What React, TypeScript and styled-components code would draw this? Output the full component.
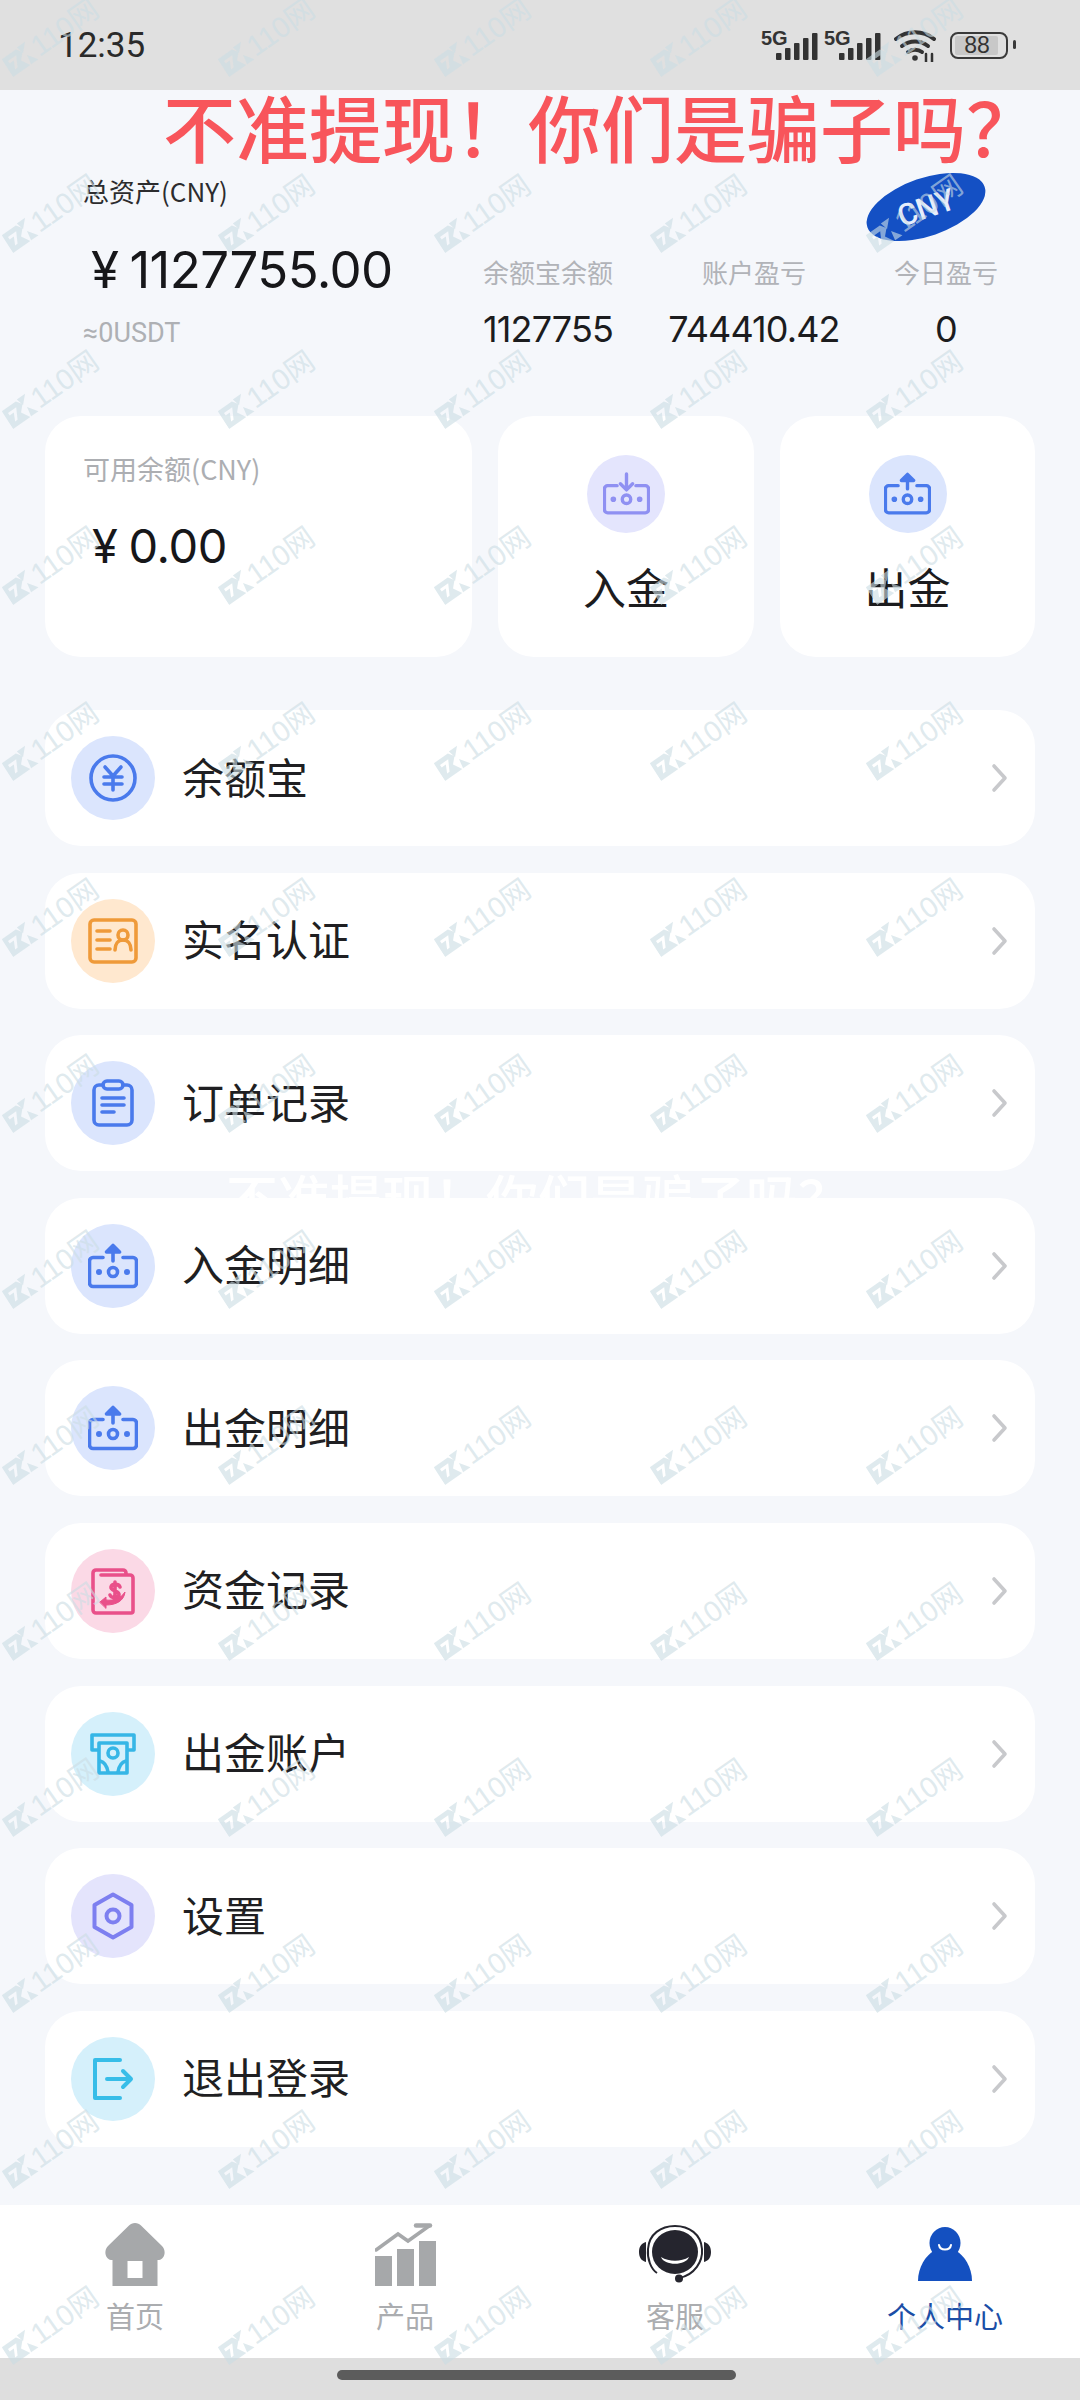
import React from 'react';
import styled, { createGlobalStyle } from 'styled-components';

const GlobalStyle = createGlobalStyle`
  html, body {
    margin: 0;
    padding: 0;
    background: #f5f7fb;
  }
  * {
    box-sizing: border-box;
  }
`;

const Page = styled.div`
  position: relative;
  width: 1080px;
  height: 2400px;
  overflow: hidden;
  display: flex;
  flex-direction: column;
  background: #f5f7fb;
  font-family: 'Noto Sans CJK SC', 'Liberation Sans', sans-serif;
  color: #1c1c1e;
`;

const StatusBar = styled.div`
  height: 90px;
  flex: none;
  display: flex;
  align-items: center;
  justify-content: space-between;
  padding: 0 72px 0 58px;
  background: #e0e0e0;
`;

const Clock = styled.span`
  font-family: Roboto, 'Liberation Sans', sans-serif;
  font-size: 35px;
  color: #2a2a2a;
`;

const StatusIcons = styled.div`
  display: flex;
  align-items: center;
  gap: 6px;

  > svg {
    margin-bottom: 5px;
  }
`;

const WifiSlot = styled.div`
  display: flex;
  margin: 2px 8px 0 7px;
`;

const Battery = styled.div`
  position: relative;
  width: 58px;
  height: 27px;
  display: flex;
  align-items: center;
  justify-content: center;
  border: 2.5px solid #3a3a3a;
  border-radius: 8px;
  font-family: 'Liberation Sans', sans-serif;
  font-size: 23px;
  color: #333;

  &::before {
    content: '';
    position: absolute;
    inset: 2px 8px 2px 3px;
    border-radius: 2px;
    background: #c8c8c8;
  }

  &::after {
    content: '';
    position: absolute;
    top: 6px;
    right: -9.5px;
    width: 3px;
    height: 9px;
    border-radius: 2px;
    background: #3a3a3a;
  }

  span {
    position: relative;
    margin-right: 4px;
  }
`;

const Headline = styled.div`
  height: 72px;
  flex: none;
  margin-top: -1px;
  padding-left: 163px;
  font-size: 73px;
  font-weight: 500;
  line-height: 72px;
  white-space: nowrap;
  color: #f8555b;
`;

const Summary = styled.section`
  position: relative;
  height: 255px;
  flex: none;
  display: flex;
  justify-content: space-between;
  padding: 13px 83px 0 83px;
`;

const TotalColumn = styled.div`
  display: flex;
  flex-direction: column;
`;

const TotalLabel = styled.div`
  font-size: 26px;
  line-height: 34px;
  white-space: nowrap;
  color: #2c2c2e;
`;

const TotalValue = styled.div`
  margin: 31px 0 0 8px;
  font-family: Inter, 'Liberation Sans', sans-serif;
  font-size: 51px;
  line-height: 62px;
  letter-spacing: -0.6px;
  color: #17171a;
`;

const Currency = styled.span`
  margin-right: 11px;
`;

const Approx = styled.div`
  margin-top: 16px;
  font-family: Roboto, 'Liberation Sans', sans-serif;
  font-size: 27px;
  line-height: 32px;
  color: #aeb0b4;
`;

const StatRow = styled.div`
  display: grid;
  grid-template-columns: 130px 282px 102px;
  margin-top: 80px;
`;

const Stat = styled.div`
  display: flex;
  flex-direction: column;
  align-items: center;
  white-space: nowrap;
`;

const StatLabel = styled.div`
  font-size: 26px;
  line-height: 36px;
  color: #b1b3b8;
`;

const StatValue = styled.div`
  margin-top: 19px;
  font-family: Inter, 'Liberation Sans', sans-serif;
  font-size: 36px;
  line-height: 40px;
  letter-spacing: -0.9px;
  color: #1c1c1e;
`;

const CnyBadge = styled.div`
  position: absolute;
  top: 17px;
  right: 92px;
  width: 124px;
  height: 58px;
  display: flex;
  align-items: center;
  justify-content: center;
  border-radius: 50%;
  transform: rotate(-19deg);
  background: #1450c4;
  font-family: Roboto, 'Liberation Sans', sans-serif;
  font-weight: 500;
  font-size: 30px;
  color: #e7eefc;
`;

const CardRow = styled.section`
  position: relative;
  z-index: 1;
  height: 241px;
  flex: none;
  display: grid;
  grid-template-columns: 427px 256px 255px;
  column-gap: 26px;
  margin: 0 45px;
`;

const Card = styled.div`
  border-radius: 36px;
  background: #ffffff;
`;

const BalanceCard = styled(Card)`
  padding: 33px 38px;
`;

const BalanceLabel = styled.div`
  font-size: 27px;
  line-height: 40px;
  color: #acaeb2;
`;

const BalanceValue = styled.div`
  margin: 32px 0 0 9px;
  font-family: Inter, 'Liberation Sans', sans-serif;
  font-size: 47px;
  line-height: 50px;
  letter-spacing: -0.4px;
  color: #17171a;
`;

const ActionCard = styled(Card)`
  display: flex;
  flex-direction: column;
  align-items: center;
  padding-top: 39px;
`;

const ActionCircle = styled.div<{ $bg: string }>`
  width: 78px;
  height: 78px;
  display: flex;
  align-items: center;
  justify-content: center;
  border-radius: 50%;
  background: ${p => p.$bg};
`;

const ActionLabel = styled.div`
  margin-top: 25px;
  font-size: 43px;
  line-height: 56px;
  color: #1c1c1e;
`;

const MenuList = styled.section`
  position: relative;
  z-index: 1;
  flex: none;
  display: flex;
  flex-direction: column;
  gap: 26.6px;
  margin: 53px 45px 0;
`;

const MenuRow = styled.div`
  height: 136px;
  display: flex;
  align-items: center;
  padding: 0 27px 0 26px;
  border-radius: 36px;
  background: #ffffff;
`;

const MenuCircle = styled.div<{ $bg: string }>`
  width: 84px;
  height: 84px;
  flex: none;
  display: flex;
  align-items: center;
  justify-content: center;
  border-radius: 50%;
  background: ${p => p.$bg};
`;

const MenuLabel = styled.div`
  flex: 1;
  margin: 0 0 5px 27px;
  font-size: 42px;
  line-height: 56px;
  color: #1f1f22;
`;

const GhostText = styled.div`
  position: absolute;
  top: 1167px;
  left: 226px;
  font-size: 52px;
  font-weight: 500;
  line-height: 60px;
  white-space: nowrap;
  color: #ffffff;
`;

const TabBar = styled.nav`
  position: absolute;
  left: 0;
  right: 0;
  top: 2205px;
  height: 153px;
  display: grid;
  grid-template-columns: repeat(4, 1fr);
  background: #ffffff;
`;

const Tab = styled.div`
  display: flex;
  flex-direction: column;
  align-items: center;
  padding-top: 13px;
`;

const TabIcon = styled.div`
  width: 72px;
  height: 72px;
  display: flex;
  align-items: center;
  justify-content: center;
`;

const TabLabel = styled.div<{ $active?: boolean }>`
  margin-top: 5px;
  font-size: 29px;
  line-height: 40px;
  color: ${p => (p.$active ? '#1b4ea6' : '#abadb0')};
`;

const GestureBar = styled.div`
  position: absolute;
  left: 0;
  right: 0;
  top: 2358px;
  height: 42px;
  display: flex;
  justify-content: center;
  padding: 12px 8px 0 0;
  background: #dedede;
`;

const GestureHandle = styled.div`
  width: 399px;
  height: 10px;
  border-radius: 5px;
  background: #5c5c5c;
`;

const WatermarkLayer = styled.div`
  position: absolute;
  inset: 0;
  z-index: 5;
  display: grid;
  grid-template-columns: repeat(5, 216px);
  grid-auto-rows: 176px;
  padding-top: 3px;
  pointer-events: none;
`;

const Mark = styled.div`
  width: 96px;
  height: 24px;
  margin: 22px 0 0 3px;
  display: flex;
  align-items: center;
  justify-content: center;
  gap: 1px;
  white-space: nowrap;
  transform: rotate(-35deg);
  color: rgba(203, 221, 228, 0.62);
  font-family: 'Liberation Sans', 'Noto Sans CJK SC', sans-serif;
  font-size: 29px;
  line-height: 24px;

  svg {
    flex: none;
  }
`;

const Blue = '#4a7aec';

const MoneyBox = ({ color, down, size = 50 }: { color: string; down?: boolean; size?: number }) => (
  <svg width={size} height={size * 0.92} viewBox="0 0 50 46" fill="none" stroke={color} strokeWidth="3.600" strokeLinecap="round" strokeLinejoin="round">
    <path d="M15 14.500H5a3.500 3.500 0 0 0-3.500 3.500v22a3.500 3.500 0 0 0 3.500 3.500h40a3.500 3.500 0 0 0 3.500-3.500V18a3.500 3.500 0 0 0-3.500-3.500H35" />
    {down ? <path d="M25 2v17M18.500 12.500l6.500 6.500 6.500-6.500" /> : <path d="M25 18V3M18.500 9l6.500-6.500L31.500 9z" fill={color} />}
    <circle cx="25" cy="29" r="4.500" />
    <circle cx="11" cy="29" r="1.200" fill={color} />
    <circle cx="39" cy="29" r="1.200" fill={color} />
  </svg>
);

const YuanIcon = () => (
  <svg width="50" height="50" viewBox="0 0 50 50" fill="none" stroke={Blue} strokeWidth="3.600" strokeLinecap="round" strokeLinejoin="round">
    <circle cx="25" cy="25" r="22" />
    <path d="M17 14l8 9 8-9M16 24h18M16 31h18M25 23v14" />
  </svg>
);

const IdIcon = () => (
  <svg width="50" height="46" viewBox="0 0 50 46" fill="none" stroke="#ef9a3a" strokeWidth="3.600" strokeLinecap="round" strokeLinejoin="round">
    <rect x="2" y="2" width="46" height="42" rx="4" />
    <path d="M9 13h13M9 22h13M9 31h13" />
    <circle cx="35" cy="17" r="5" />
    <path d="M27 32c0-6 3-10 8-10s8 4 8 10" />
  </svg>
);

const ClipboardIcon = () => (
  <svg width="44" height="50" viewBox="0 0 44 50" fill="none" stroke={Blue} strokeWidth="3.600" strokeLinecap="round" strokeLinejoin="round">
    <path d="M12 7H8a5 5 0 0 0-5 5v30a5 5 0 0 0 5 5h28a5 5 0 0 0 5-5V12a5 5 0 0 0-5-5h-4" />
    <rect x="12" y="3" width="20" height="8" rx="4" />
    <path d="M11 20h22M11 27h22M11 34h12" />
  </svg>
);

const LedgerIcon = () => (
  <svg width="44" height="48" viewBox="0 0 44 48" fill="none" stroke="#e9508a" strokeWidth="3.600" strokeLinecap="round" strokeLinejoin="round">
    <path d="M35 8V6a3 3 0 0 0-3-3H5a3 3 0 0 0-3 3v37a3 3 0 0 0 3 3h35a2 2 0 0 0 2-2V11a3 3 0 0 0-3-3H10" />
    <path d="M29 20c-1-3-8-4-9 0s9 4 8 8-8 3-9 0M24 15v18" />
    <path d="M9 35l6-5v3c8 1 15-2 19-8-1 9-9 13-19 13v3z" fill="#e9508a" strokeWidth="1" />
  </svg>
);

const AtmIcon = () => (
  <svg width="46" height="42" viewBox="0 0 46 42" fill="none" stroke="#36b6e6" strokeWidth="3.600" strokeLinecap="round" strokeLinejoin="round">
    <path d="M8 17H2V2h42v15h-6" />
    <path d="M9 10h28v30H9z" />
    <circle cx="23" cy="20" r="5" />
    <path d="M10 28c4 1 7 5 8 11M36 28c-4 1-7 5-8 11" />
  </svg>
);

const HexIcon = () => (
  <svg width="44" height="48" viewBox="0 0 44 48" fill="none" stroke="#7d7ff0" strokeWidth="4" strokeLinejoin="round">
    <path d="M22 2.500l18.500 10.500v22L22 45.500 3.500 35V13z" />
    <circle cx="22" cy="24" r="6.500" />
  </svg>
);

const LogoutIcon = () => (
  <svg width="42" height="42" viewBox="0 0 42 42" fill="none" stroke="#37bde8" strokeWidth="4" strokeLinecap="round" strokeLinejoin="round">
    <path d="M28 2H3v38h25" />
    <path d="M15 21h24M31 13l8 8-8 8" />
  </svg>
);

const Chevron = () => (
  <svg width="17" height="30" viewBox="0 0 17 30" fill="none" stroke="#c8c9cc" strokeWidth="3.600" strokeLinecap="round" strokeLinejoin="round">
    <path d="M3 3l11 12L3 27" />
  </svg>
);

const Signal = () => (
  <svg width="57" height="36" viewBox="0 0 57 36" fill="#333">
    <text x="0" y="20" fontFamily="Liberation Sans" fontWeight="700" fontSize="20">5G</text>
    <rect x="15" y="28" width="5.500" height="7" rx="1" />
    <rect x="24" y="23" width="5.500" height="12" rx="1" />
    <rect x="33" y="18" width="5.500" height="17" rx="1" />
    <rect x="42" y="13" width="5.500" height="22" rx="1" />
    <rect x="51" y="8" width="5.500" height="27" rx="1" />
  </svg>
);

const Wifi = () => (
  <svg width="42" height="32" viewBox="0 0 42 32" fill="none" stroke="#333" strokeWidth="4" strokeLinecap="round">
    <path d="M2 9c11-9 27-9 38 0" />
    <path d="M8 16c8-6 18-6 26 0" />
    <path d="M14 22c4-3 10-3 14 0" />
    <circle cx="21" cy="28" r="2.800" fill="#333" stroke="none" />
    <path d="M32 24v8M38 24v8" strokeWidth="2.500" />
  </svg>
);

const HomeIcon = () => (
  <svg width="60" height="63" viewBox="0 0 60 63" fill="#a6a8aa">
    <path fillRule="evenodd" d="M30 0c2.500 0 4.500 1 6 2.500L57 23c4.500 4.500 3 13-3 14h-1.500v26h-45V37H6c-6-1-7.500-9.500-3-14L24 2.500C25.500 1 27.500 0 30 0zM22.500 38v17h15V38z" />
  </svg>
);

const ChartIcon = () => (
  <svg width="61" height="63" viewBox="0 0 61 63" fill="none">
    <path d="M1 27l22-16 10 7L54 3" stroke="#a6a8aa" strokeWidth="3.500" strokeLinecap="round" />
    <path d="M41 2.500h14" stroke="#a6a8aa" strokeWidth="4.500" strokeLinecap="round" />
    <path d="M0 33h17v30H0zM22 26h17v37H22zM44 18h17v45H44z" fill="#a6a8aa" />
  </svg>
);

const ServiceIcon = () => (
  <svg width="72" height="58" viewBox="0 0 72 58" fill="none">
    <path d="M9 24C10 9 22 1 36 1s26 8 27 23c1 12-7 26-23 29" stroke="#25252e" strokeWidth="2" />
    <path d="M9 24C8 34 12 44 18 48" stroke="#25252e" strokeWidth="2" />
    <ellipse cx="36" cy="27" rx="23" ry="22" fill="#25252e" />
    <path d="M0 27c0-6 3-9 7-10v20c-4-1-7-4-7-10zM72 27c0-6-3-9-7-10v20c4-1 7-4 7-10z" fill="#25252e" />
    <path d="M22 32c8 5 20 5 28 0-3 9-25 9-28 0z" fill="#fff" />
    <circle cx="40" cy="53.500" r="4" fill="#25252e" />
  </svg>
);

const UserIcon = () => (
  <svg width="56" height="54" viewBox="0 0 56 54" fill="#1450c0">
    <ellipse cx="28" cy="16" rx="15.500" ry="16" />
    <path d="M1 54c0-14 8-26 16-30h22c8 4 16 16 16 30z" />
    <path d="M22 18c1 6 11 6 12 0" fill="none" stroke="#fff" strokeWidth="2" strokeLinecap="round" />
  </svg>
);

const MarkLogo = () => (
  <svg width="32" height="26" viewBox="0 0 32 26" fill="currentColor">
    <path fillRule="evenodd" d="M1 3h17l4 6-6 6 5 9H0zM5 8v3h5l-4 8h3l6-11z" />
    <path d="M20 2h10l-8 8zM24 14l7 10h-9z" />
  </svg>
);

const menuItems = [
  { label: '余额宝', bg: '#dbe5fd', icon: <YuanIcon /> },
  { label: '实名认证', bg: '#ffe8cf', icon: <IdIcon /> },
  { label: '订单记录', bg: '#dbe5fd', icon: <ClipboardIcon /> },
  { label: '入金明细', bg: '#dbe5fd', icon: <MoneyBox color={Blue} /> },
  { label: '出金明细', bg: '#dbe5fd', icon: <MoneyBox color={Blue} /> },
  { label: '资金记录', bg: '#fbd9e6', icon: <LedgerIcon /> },
  { label: '出金账户', bg: '#d5f0fb', icon: <AtmIcon /> },
  { label: '设置', bg: '#e4e4fc', icon: <HexIcon /> },
  { label: '退出登录', bg: '#d5f0fb', icon: <LogoutIcon /> },
];

const stats = [
  { label: '余额宝余额', value: '1127755' },
  { label: '账户盈亏', value: '744410.42' },
  { label: '今日盈亏', value: '0' },
];

const tabs = [
  { label: '首页', icon: <HomeIcon /> },
  { label: '产品', icon: <ChartIcon /> },
  { label: '客服', icon: <ServiceIcon /> },
  { label: '个人中心', icon: <UserIcon />, active: true },
];

export default function App() {
  return (
    <Page>
      <GlobalStyle />
      <StatusBar>
        <Clock>12:35</Clock>
        <StatusIcons>
          <Signal />
          <Signal />
          <WifiSlot><Wifi /></WifiSlot>
          <Battery><span>88</span></Battery>
        </StatusIcons>
      </StatusBar>

      <Headline>不准提现！你们是骗子吗？</Headline>

      <Summary>
        <TotalColumn>
          <TotalLabel>总资产(CNY)</TotalLabel>
          <TotalValue><Currency>¥</Currency>1127755.00</TotalValue>
          <Approx>≈0USDT</Approx>
        </TotalColumn>
        <StatRow>
          {stats.map(s => (
            <Stat key={s.label}>
              <StatLabel>{s.label}</StatLabel>
              <StatValue>{s.value}</StatValue>
            </Stat>
          ))}
        </StatRow>
        <CnyBadge>CNY</CnyBadge>
      </Summary>

      <GhostText>不准提现！你们是骗子吗？</GhostText>

      <CardRow>
        <BalanceCard>
          <BalanceLabel>可用余额(CNY)</BalanceLabel>
          <BalanceValue><Currency>¥</Currency>0.00</BalanceValue>
        </BalanceCard>
        <ActionCard>
          <ActionCircle $bg="#e4e5fd"><MoneyBox color="#8f90f2" down size={47} /></ActionCircle>
          <ActionLabel>入金</ActionLabel>
        </ActionCard>
        <ActionCard>
          <ActionCircle $bg="#dbe5fd"><MoneyBox color={Blue} size={47} /></ActionCircle>
          <ActionLabel>出金</ActionLabel>
        </ActionCard>
      </CardRow>

      <MenuList>
        {menuItems.map(item => (
          <MenuRow key={item.label}>
            <MenuCircle $bg={item.bg}>{item.icon}</MenuCircle>
            <MenuLabel>{item.label}</MenuLabel>
            <Chevron />
          </MenuRow>
        ))}
      </MenuList>

      <TabBar>
        {tabs.map(t => (
          <Tab key={t.label}>
            <TabIcon>{t.icon}</TabIcon>
            <TabLabel $active={t.active}>{t.label}</TabLabel>
          </Tab>
        ))}
      </TabBar>

      <GestureBar><GestureHandle /></GestureBar>

      <WatermarkLayer>
        {Array.from({ length: 70 }, (_, i) => (
          <Mark key={i}><MarkLogo />110网</Mark>
        ))}
      </WatermarkLayer>
    </Page>
  );
}
